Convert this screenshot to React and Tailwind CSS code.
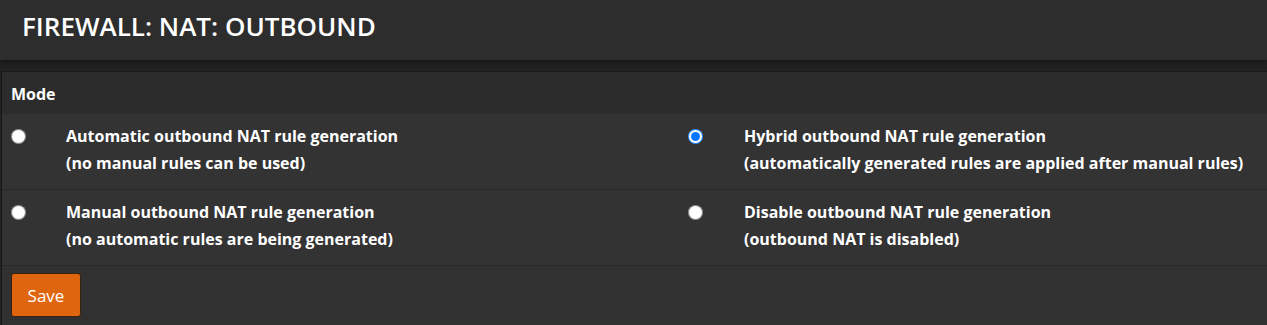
import React, { useState } from 'react';

const modes = [
  {
    id: 'automatic',
    title: 'Automatic outbound NAT rule generation',
    hint: '(no manual rules can be used)',
  },
  {
    id: 'hybrid',
    title: 'Hybrid outbound NAT rule generation',
    hint: '(automatically generated rules are applied after manual rules)',
  },
  {
    id: 'advanced',
    title: 'Manual outbound NAT rule generation',
    hint: '(no automatic rules are being generated)',
  },
  {
    id: 'disabled',
    title: 'Disable outbound NAT rule generation',
    hint: '(outbound NAT is disabled)',
  },
];

const ModeOption = ({ mode, checked, onChange }) => (
  <>
    <div className="pt-[6px]">
      <input
        type="radio"
        name="mode"
        value={mode.id}
        checked={checked}
        onChange={() => onChange(mode.id)}
        className="m-0 block h-[15px] w-[15px]"
      />
    </div>
    <div className="leading-[27px]">
      <div>{mode.title}</div>
      <div>{mode.hint}</div>
    </div>
  </>
);

const App = () => {
  const [mode, setMode] = useState('hybrid');

  const rows = [
    [modes[0], modes[1]],
    [modes[2], modes[3]],
  ];

  return (
    <div className="h-[325px] w-full overflow-hidden bg-[#222222] font-['Open_Sans',sans-serif] text-white">
      {/* Page header */}
      <div className="h-[60px] bg-[#2d2d2d] pl-[22px] pt-[11px] shadow-[0_2px_6px_rgba(0,0,0,0.45)]">
        <h1 className="text-[26px] font-semibold leading-[1.2]">FIREWALL: NAT: OUTBOUND</h1>
      </div>

      {/* Mode panel */}
      <div className="ml-[1px] mt-[11px] border-l border-t border-[#191919] bg-[#2c2c2c]">
        <div className="h-[42px] pl-[9px] pt-[9px] text-[16px] font-bold leading-[26px]">Mode</div>

        {rows.map((pair, i) => (
          <div
            key={i}
            className="grid h-[76px] grid-cols-[55px_622px_56px_1fr] border-b border-[#292929] bg-[#333333] pl-[9px] pt-[9px] text-[16px] font-bold"
          >
            {pair.map((m) => (
              <ModeOption key={m.id} mode={m} checked={mode === m.id} onChange={setMode} />
            ))}
          </div>
        ))}

        <div className="h-[60px] bg-[#313131] pl-[9px] pt-[7px]">
          <button className="h-[44px] w-[70px] rounded-[3px] border border-[#3a2410] bg-[#e0650f] pt-[1px] text-[17px] text-white">
            Save
          </button>
        </div>
      </div>
    </div>
  );
};

export default App;
